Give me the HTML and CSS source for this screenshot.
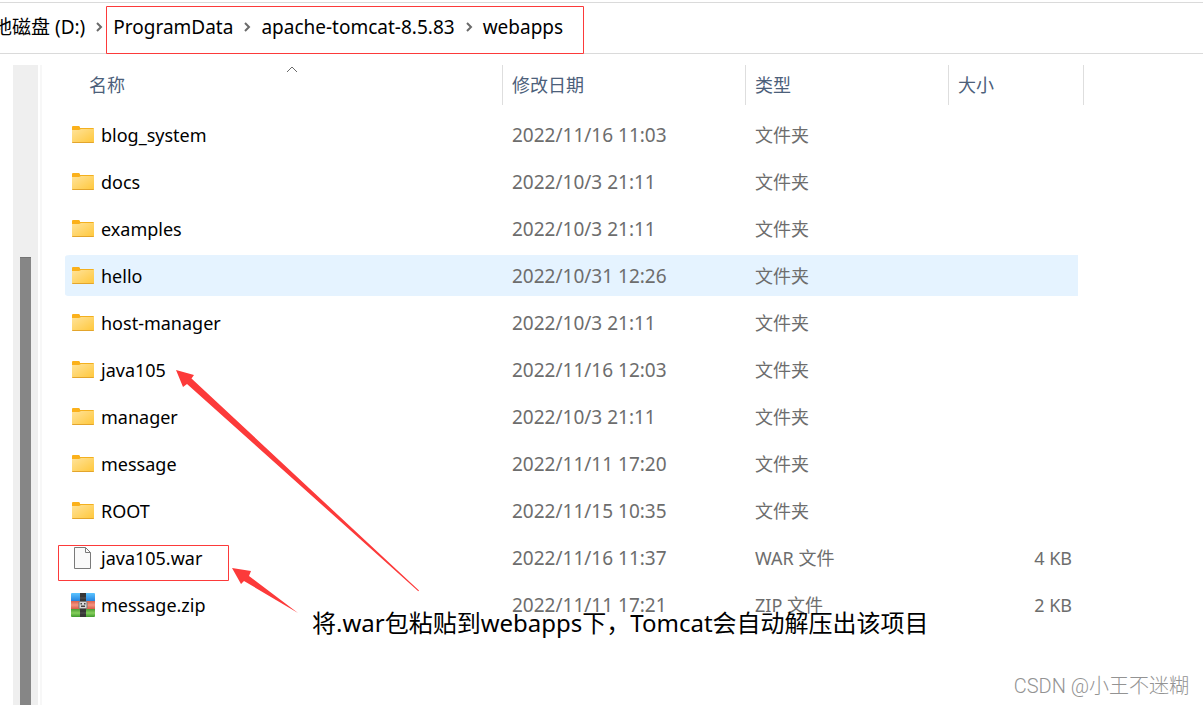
FILE: index.html
```html
<!DOCTYPE html>
<html lang="zh-CN">
<head>
<meta charset="utf-8">
<title>webapps</title>
<link rel="stylesheet" href="styles.css">
</head>
<body>
<svg class="defs" aria-hidden="true">
  <defs>
    <linearGradient id="folder-fill" x1="0" y1="0" x2="1" y2="1"><stop offset="0" stop-color="#ffe39a"/><stop offset="1" stop-color="#ffc73a"/></linearGradient>
    <linearGradient id="zip-blue" x1="0" y1="0" x2="0" y2="1"><stop offset="0" stop-color="#5cc4ff"/><stop offset="1" stop-color="#2484e0"/></linearGradient>
    <linearGradient id="zip-red" x1="0" y1="0" x2="0" y2="1"><stop offset="0" stop-color="#d9604c"/><stop offset=".5" stop-color="#f5937f"/><stop offset="1" stop-color="#d95c48"/></linearGradient>
    <linearGradient id="zip-green" x1="0" y1="0" x2="0" y2="1"><stop offset="0" stop-color="#4a9b34"/><stop offset=".5" stop-color="#86cf5c"/><stop offset="1" stop-color="#3f9a2c"/></linearGradient>
    <symbol id="folder" viewBox="0 0 24 24">
      <path d="M1 4q0-1 1-1h6l1 1v3H1z" fill="#fbb11b"/>
      <path d="M8 5h14q1 0 1 1v1H8z" fill="#f3b01f"/>
      <path d="M1 7h7l2-1h13v13q0 1-1 1H2q-1 0-1-1z" fill="url(#folder-fill)"/>
      <path d="M1 19h22q0 1-1 1H2q-1 0-1-1z" fill="#e3a52c"/>
    </symbol>
    <symbol id="file" viewBox="0 0 24 24">
      <path d="M3.500 1.500h11l5 5v16h-16z" fill="#fafafa" stroke="#7a7a7a"/>
      <path d="M14.500 1.500v5h5" fill="none" stroke="#7a7a7a"/>
    </symbol>
    <symbol id="archive" viewBox="0 0 24 24">
      <path d="M0 8V1q0-1 1-1h22q1 0 1 1v7z" fill="url(#zip-blue)"/>
      <path d="M0 8h24v8H0z" fill="url(#zip-red)"/>
      <path d="M0 16h24v7q0 1-1 1H1q-1 0-1-1z" fill="url(#zip-green)"/>
      <path d="M9 0h6v24H9z" fill="#363636"/>
      <path d="M9 5h6M9 20h6" stroke="#555"/>
      <rect x="8" y="8.500" width="8" height="7" rx="1" fill="#d8d8d8" stroke="#777"/>
      <path d="M9.500 10h1.500v1.500H9.500zM13 10h1.500v1.500H13zM10 12.500h4v1.500h-4z" fill="#444"/>
    </symbol>
    <symbol id="chevron" viewBox="0 0 8 12"><path d="M2 2l4 4-4 4" fill="none" stroke="#6a6a6a" stroke-width="2"/></symbol>
  </defs>
</svg>

<nav class="address" aria-label="路径">
  <a class="crumb crumb-drive" href="#">本地磁盘 (D:)</a>
  <svg class="sep"><use href="#chevron"/></svg>
  <a class="crumb" href="#">ProgramData</a>
  <svg class="sep"><use href="#chevron"/></svg>
  <a class="crumb" href="#">apache-tomcat-8.5.83</a>
  <svg class="sep"><use href="#chevron"/></svg>
  <a class="crumb" href="#">webapps</a>
</nav>

<main class="explorer">
  <div class="scroll"><div class="thumb"></div></div>
  <div class="pane">
    <table class="files">
      <colgroup><col class="col-name"><col class="col-date"><col class="col-type"><col class="col-size"></colgroup>
      <thead>
        <tr>
          <th><button class="head head-name" type="button">名称<svg class="sort" viewBox="0 0 12 7"><path d="M1 6l5-5 5 5" fill="none" stroke="#6a6a6a"/></svg></button></th>
          <th><button class="head" type="button">修改日期</button></th>
          <th><button class="head" type="button">类型</button></th>
          <th><button class="head" type="button">大小</button></th>
        </tr>
      </thead>
      <tbody>
        <tr><td><div class="name"><svg class="icon"><use href="#folder"/></svg>blog_system</div></td><td class="date">2022/11/16 11:03</td><td>文件夹</td><td></td></tr>
        <tr><td><div class="name"><svg class="icon"><use href="#folder"/></svg>docs</div></td><td class="date">2022/10/3 21:11</td><td>文件夹</td><td></td></tr>
        <tr><td><div class="name"><svg class="icon"><use href="#folder"/></svg>examples</div></td><td class="date">2022/10/3 21:11</td><td>文件夹</td><td></td></tr>
        <tr class="active"><td><div class="name"><svg class="icon"><use href="#folder"/></svg>hello</div></td><td class="date">2022/10/31 12:26</td><td>文件夹</td><td></td></tr>
        <tr><td><div class="name"><svg class="icon"><use href="#folder"/></svg>host-manager</div></td><td class="date">2022/10/3 21:11</td><td>文件夹</td><td></td></tr>
        <tr><td><div class="name"><svg class="icon"><use href="#folder"/></svg>java105</div></td><td class="date">2022/11/16 12:03</td><td>文件夹</td><td></td></tr>
        <tr><td><div class="name"><svg class="icon"><use href="#folder"/></svg>manager</div></td><td class="date">2022/10/3 21:11</td><td>文件夹</td><td></td></tr>
        <tr><td><div class="name"><svg class="icon"><use href="#folder"/></svg>message</div></td><td class="date">2022/11/11 17:20</td><td>文件夹</td><td></td></tr>
        <tr><td><div class="name"><svg class="icon"><use href="#folder"/></svg>ROOT</div></td><td class="date">2022/11/15 10:35</td><td>文件夹</td><td></td></tr>
        <tr><td><div class="name"><svg class="icon"><use href="#file"/></svg>java105.war</div></td><td class="date">2022/11/16 11:37</td><td>WAR 文件</td><td>4 KB</td></tr>
        <tr><td><div class="name"><svg class="icon"><use href="#archive"/></svg>message.zip</div></td><td class="date">2022/11/11 17:21</td><td>ZIP 文件</td><td>2 KB</td></tr>
      </tbody>
    </table>
  </div>
</main>

<svg class="marks" viewBox="0 0 600 640" aria-hidden="true">
  <g fill="none" stroke="#fc3a3a"><path d="M106.500 6.500h477v47h-477zM58.500 545.500h170v35h-170z"/></g>
  <g fill="#fc3a3a">
    <path d="M176 370l18 5-2.500 3.500L419 590.500l-.7.700L187 384l-4 3z"/>
    <path d="M232 568l19 3-2 5 49 37-54-32-3 3z"/>
  </g>
</svg>
<p class="note">将.war包粘贴到webapps下，Tomcat会自动解压出该项目</p>
<p class="watermark">CSDN @小王不迷糊</p>
</body>
</html>
```
FILE: styles.css
```css
* {
  box-sizing: border-box;
}

body {
  margin: 0;
  min-height: 100vh;
  display: flex;
  flex-direction: column;
  position: relative;
  overflow: hidden;
  background: #fff;
  color: #000;
  font: 18px/24px "Noto Sans", "Noto Sans CJK SC", sans-serif;
}

.defs {
  position: absolute;
  width: 0;
  height: 0;
}

.address {
  display: flex;
  align-items: center;
  gap: 10px;
  height: 52px;
  margin-top: 2px;
  padding-bottom: 2px;
  border-top: 1px solid #dadada;
  border-bottom: 1px solid #dadada;
  font-size: 19px;
  white-space: nowrap;
}

.crumb {
  color: #000;
  text-decoration: none;
}

.crumb-drive {
  margin-left: -26px;
}

.sep {
  width: 8px;
  height: 12px;
}

.explorer {
  flex: 1;
  display: flex;
  padding: 11px 119px 0 13px;
}

.scroll {
  width: 25px;
  padding: 192px 7px 0;
  display: flex;
  background: #efefef;
}

.thumb {
  flex: 1;
  background: #868686;
  border-top: 1px solid #747474;
}

.pane {
  flex: 1;
  margin-left: 2px;
  padding-left: 23px;
  border-left: 2px solid #f7f7f7;
}

.files {
  width: 100%;
  table-layout: fixed;
  border-collapse: separate;
  border-spacing: 0;
}

.col-date {
  width: 243px;
}

.col-type {
  width: 203px;
}

.col-size {
  width: 135px;
}

th {
  height: 46px;
  padding: 0;
  font-weight: 400;
  vertical-align: top;
}

.head {
  display: block;
  position: relative;
  width: 100%;
  height: 40px;
  padding: 0 9px;
  border: 0;
  border-right: 1px solid #dedede;
  background: none;
  color: #4c607a;
  font: inherit;
  text-align: left;
}

.head-name {
  padding-left: 24px;
}

.sort {
  position: absolute;
  top: 1px;
  left: 221px;
  width: 12px;
  height: 7px;
}

td {
  height: 47px;
  padding: 0 9px;
  border: 0 solid transparent;
  border-width: 3px 0;
  background-clip: padding-box;
  color: #6d6d6d;
  white-space: nowrap;
}

td:first-child {
  padding-left: 6px;
  border-radius: 5px 0 0 5px;
  color: #000;
}

td:last-child {
  padding-right: 6px;
  border-right-width: 6px;
  text-align: right;
}

.date {
  font-size: 19px;
}

.active td {
  background-color: #e5f3ff;
}

.name {
  display: flex;
  align-items: center;
  gap: 6px;
}

.icon {
  width: 24px;
  height: 24px;
}

.marks {
  position: absolute;
  top: 0;
  left: 0;
  width: 600px;
  height: 640px;
  pointer-events: none;
}

.note {
  position: absolute;
  top: 607px;
  left: 312px;
  margin: 0;
  font-size: 24px;
  line-height: 32px;
  white-space: nowrap;
}

.watermark {
  position: absolute;
  right: 14px;
  bottom: 7px;
  margin: 0;
  color: #939393;
  font-family: Roboto, "Noto Sans CJK SC", sans-serif;
  font-size: 20px;
  font-weight: 300;
}
```
